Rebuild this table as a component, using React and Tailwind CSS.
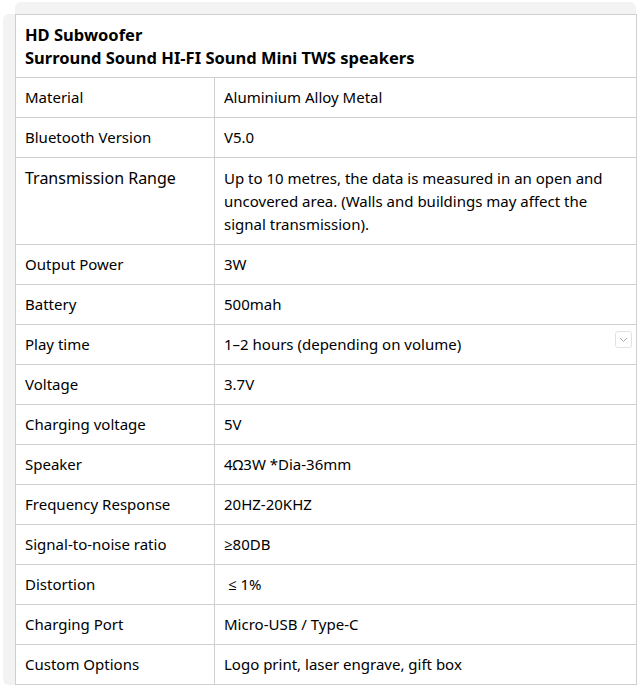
import React from 'react';

const rows = [
    ['Material', 'Aluminium Alloy Metal'],
    ['Bluetooth Version', 'V5.0'],
    ['Transmission Range', 'Up to 10 metres, the data is measured in an open and uncovered area. (Walls and buildings may affect the signal transmission).'],
    ['Output Power', '3W'],
    ['Battery', '500mah'],
    ['Play time', '1–2 hours (depending on volume)'],
    ['Voltage', '3.7V'],
    ['Charging voltage', '5V'],
    ['Speaker', '4Ω3W *Dia-36mm'],
    ['Frequency Response', '20HZ-20KHZ'],
    ['Signal-to-noise ratio', '≥80DB'],
    ['Distortion', '\u00a0≤ 1%'],
    ['Charging Port', 'Micro-USB / Type-C'],
    ['Custom Options', 'Logo print, laser engrave, gift box'],
];

export default function App() {
    return (
        <div
            className="min-h-screen bg-white pt-[2px] pl-[3px] text-black"
            style={{ fontFamily: '"Noto Sans", "Open Sans", sans-serif' }}
        >
            <div className="grid grid-cols-[12px_622px] grid-rows-[12px_auto] w-[634px]">
                <div className="bg-white" />
                <div className="bg-[#f3f3f3] rounded-t-md mr-[1px]" />
                <div className="bg-[#f3f3f3] rounded-l-md" />
                <table className="border-collapse w-[622px] bg-white table-fixed">
                    <colgroup>
                        <col className="w-[199px]" />
                        <col />
                    </colgroup>
                    <thead>
                        <tr>
                            <th
                                colSpan={2}
                                className="border border-[#cfcfcf] h-[63px] px-[9px] text-left font-bold text-[16.5px] leading-[23px] text-black"
                            >
                                HD Subwoofer
                                <br />
                                Surround Sound HI-FI Sound Mini TWS speakers
                            </th>
                        </tr>
                    </thead>
                    <tbody>
                        {rows.map(([k, v]) => {
                            const big = k === 'Transmission Range';
                            return (
                                <tr key={k}>
                                    <td
                                        className={`border border-[#cfcfcf] px-[9px] align-top ${big ? 'pt-[9px] text-[16px] leading-[23px]' : 'pt-[8px] pb-[8px] h-[40px] text-[15px] leading-[23px]'}`}
                                    >
                                        {k}
                                    </td>
                                    <td
                                        className={`border border-[#cfcfcf] px-[9px] align-top text-[15px] leading-[23px] ${big ? 'pt-[9px] pb-[8px]' : 'pt-[8px] pb-[8px]'}`}
                                    >
                                        {k === 'Play time' ? (
                                            <div className="flex items-center justify-between">
                                                <span>{v}</span>
                                                <span className="flex items-center justify-center w-[17px] h-[17px] border border-[#e2e2e2] rounded-[3px] mr-[-5px] mt-[-10px]">
                                                    <svg width="9" height="6" viewBox="0 0 9 6" fill="none">
                                                        <path d="M1 1l3.5 3.5L8 1" stroke="#a8a8a8" strokeWidth="1" />
                                                    </svg>
                                                </span>
                                            </div>
                                        ) : (
                                            v
                                        )}
                                    </td>
                                </tr>
                            );
                        })}
                    </tbody>
                </table>
            </div>
        </div>
    );
}
